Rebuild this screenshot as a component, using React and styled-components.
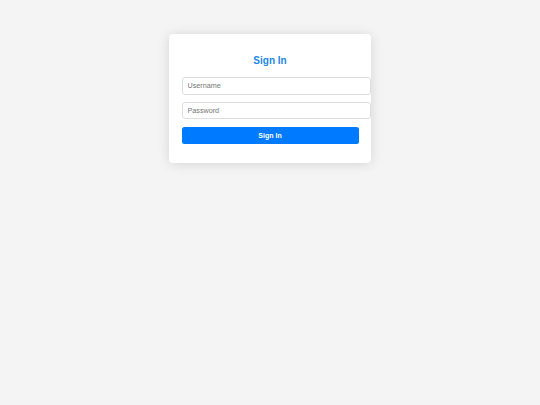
import React from 'react'
import styled, { createGlobalStyle } from 'styled-components'

const GlobalStyle = createGlobalStyle`
  html, body {
    margin: 0;
    padding: 0;
    background-color: #f4f4f4;
    font-family: 'Liberation Sans', Arial, sans-serif;
  }
`

const Page = styled.div`
  display: flex;
  justify-content: center;
  min-height: 405px;
  padding-top: 34px;
  box-sizing: border-box;
`

const Card = styled.form`
  width: 202px;
  height: 129px;
  box-sizing: border-box;
  padding: 21px 12.5px 0;
  background-color: #fff;
  border-radius: 4px;
  box-shadow: 0 1px 12px rgba(0, 0, 0, 0.13);
  display: flex;
  flex-direction: column;
`

const Title = styled.h2`
  margin: 0 0 10px;
  font-size: 10px;
  line-height: 12px;
  font-weight: bold;
  text-align: center;
  color: #1c87e5;
`

const Input = styled.input`
  width: 100%;
  height: 15.7px;
  margin: 0 0 7px;
  padding: 0 5px;
  box-sizing: content-box;
  border: 1px solid #dedede;
  border-radius: 3px;
  font-family: 'Liberation Sans', Arial, sans-serif;
  font-size: 7.2px;
  line-height: 15.7px;
  color: #333;
  outline: none;
  &::placeholder {
    color: #757575;
  }
`

const Button = styled.button`
  width: 100%;
  height: 17.6px;
  margin-top: ${props => props.$offset || 0}px;
  padding: 0;
  border: none;
  border-radius: 2.5px;
  background-color: #007bff;
  color: #fff;
  font-family: 'Liberation Sans', Arial, sans-serif;
  font-size: 7px;
  font-weight: bold;
  cursor: pointer;
`

const App = () => {
  return (
    <>
      <GlobalStyle />
      <Page>
        <Card onSubmit={e => e.preventDefault()}>
          <Title>Sign In</Title>
          <Input type="text" placeholder="Username" />
          <Input type="password" placeholder="Password" />
          <Button type="submit" $offset={0.4}>
            Sign In
          </Button>
        </Card>
      </Page>
    </>
  )
}

export default App
